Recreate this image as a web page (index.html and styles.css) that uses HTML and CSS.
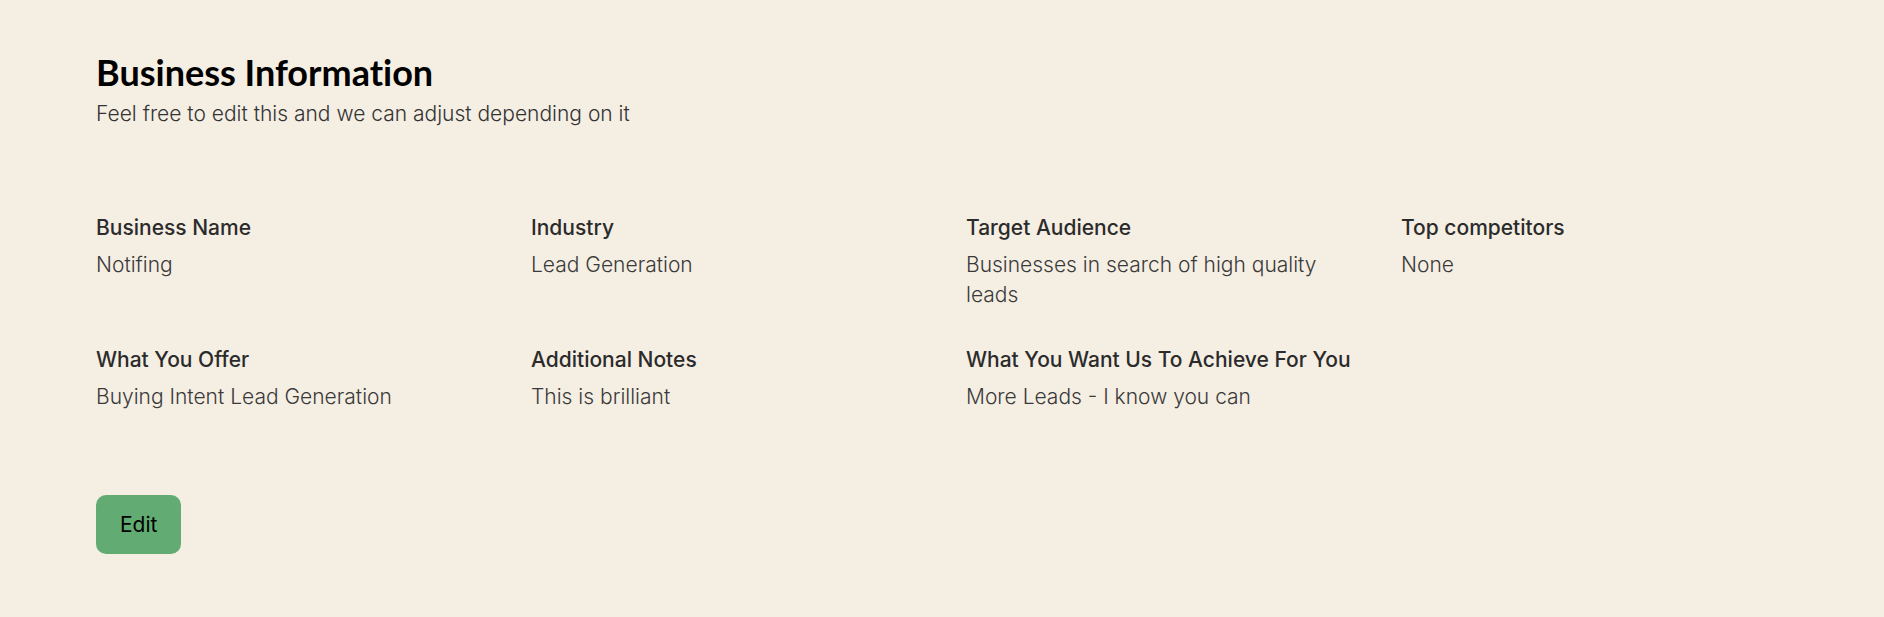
FILE: index.html
```html
<!DOCTYPE html>
<html lang="en">
<head>
    <meta charset="UTF-8">
    <meta name="viewport" content="width=device-width, initial-scale=1.0">
    <title>Business Information</title>
    <link rel="stylesheet" href="styles.css">
</head>
<body>
    <div class="page">
        <h1 class="title">Business Information</h1>
        <p class="subtitle">Feel free to edit this and we can adjust depending on it</p>

        <div class="info-grid">
            <div class="field">
                <div class="label">Business Name</div>
                <div class="value">Notifing</div>
            </div>
            <div class="field">
                <div class="label">Industry</div>
                <div class="value">Lead Generation</div>
            </div>
            <div class="field">
                <div class="label">Target Audience</div>
                <div class="value">Businesses in search of high quality leads</div>
            </div>
            <div class="field">
                <div class="label">Top competitors</div>
                <div class="value">None</div>
            </div>
            <div class="field">
                <div class="label">What You Offer</div>
                <div class="value">Buying Intent Lead Generation</div>
            </div>
            <div class="field">
                <div class="label">Additional Notes</div>
                <div class="value">This is brilliant</div>
            </div>
            <div class="field">
                <div class="label">What You Want Us To Achieve For You</div>
                <div class="value">More Leads - I know you can</div>
            </div>
        </div>

        <button class="edit-btn">Edit</button>
    </div>
</body>
</html>
```

FILE: styles.css
```css
body {
    margin: 0;
    background-color: #f5eee3;
    font-family: Inter, "Noto Sans", sans-serif;
    color: #2b2b2b;
}
.page {
    padding: 50px 96px;
}
.title {
    font-family: Lato, "Liberation Sans", sans-serif;
    font-weight: 700;
    font-size: 36px;
    line-height: 44px;
    font-variant-ligatures: none;
    font-feature-settings: "liga" 0, "clig" 0, "dlig" 0;
    color: #000;
    margin: 0 0 5px;
}
.subtitle {
    font-size: 21px;
    font-weight: 300;
    line-height: 30px;
    color: #333;
    margin: 0 0 84px;
}
.info-grid {
    display: grid;
    grid-template-columns: repeat(4, 1fr);
    column-gap: 48px;
    row-gap: 35px;
}
.field {
    display: flex;
    flex-direction: column;
    gap: 7px;
}
.label {
    font-size: 21px;
    font-weight: 500;
    line-height: 30px;
    color: #2b2b2b;
}
.value {
    font-size: 21px;
    font-weight: 300;
    line-height: 30px;
    color: #3a3a3a;
}
.edit-btn {
    margin-top: 83px;
    background: #62ac74;
    color: #000;
    border: none;
    border-radius: 10px;
    padding: 14px 24px;
    font-family: Inter, "Noto Sans", sans-serif;
    font-size: 21px;
    font-weight: 400;
    line-height: 31px;
    cursor: pointer;
}
```
